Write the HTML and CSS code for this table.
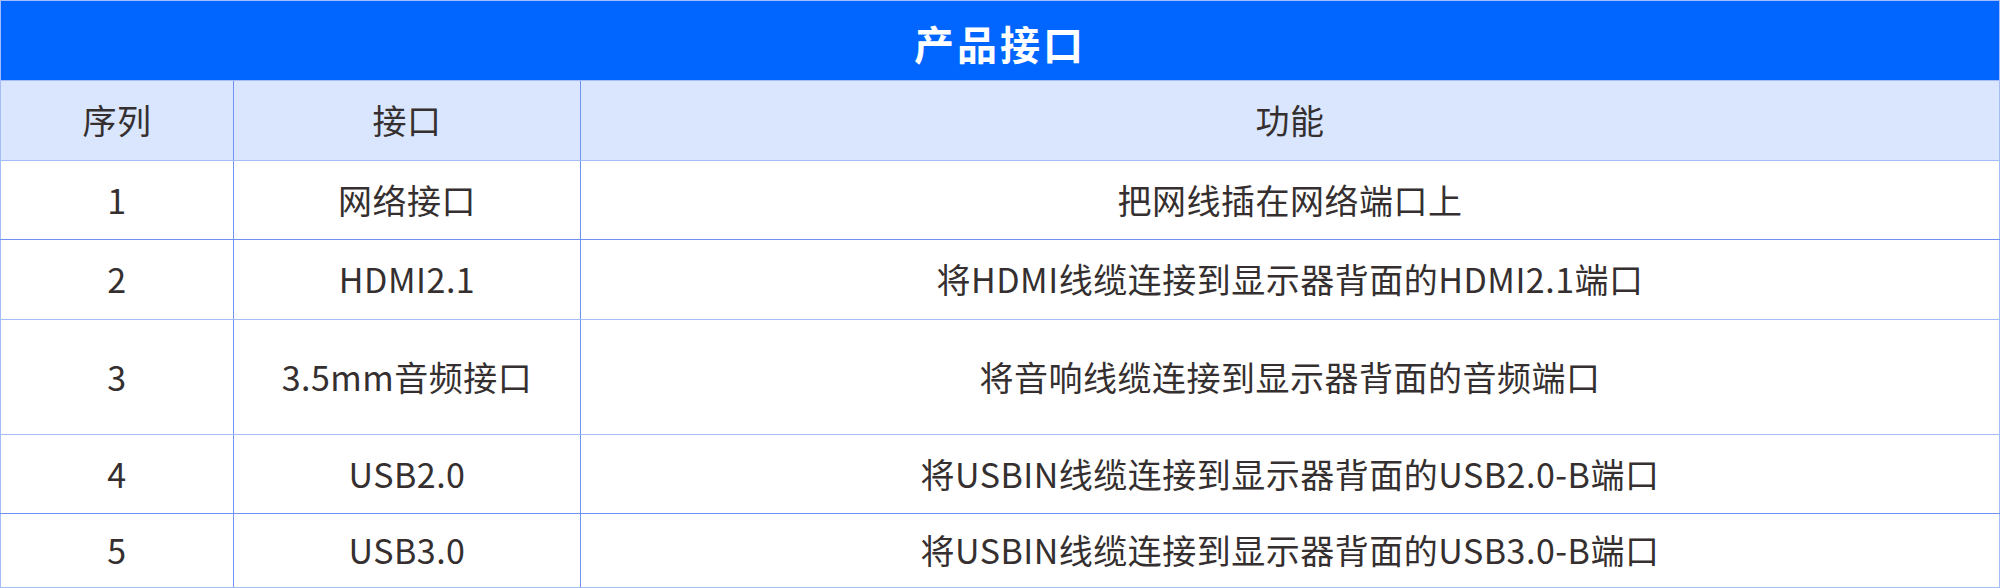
FILE: index.html
```html
<!DOCTYPE html>
<html lang="zh-CN">
<head>
<meta charset="utf-8">
<title>产品接口</title>
<link rel="stylesheet" href="styles.css">
</head>
<body>
<table class="spec">
  <colgroup>
    <col class="c-idx">
    <col class="c-port">
    <col class="c-func">
  </colgroup>
  <thead>
    <tr class="title-row"><th colspan="3" class="title">产品接口</th></tr>
    <tr class="head-row"><th>序列</th><th>接口</th><th>功能</th></tr>
  </thead>
  <tbody>
    <tr class="r1"><td>1</td><td>网络接口</td><td>把网线插在网络端口上</td></tr>
    <tr class="r2"><td>2</td><td>HDMI2.1</td><td>将HDMI线缆连接到显示器背面的HDMI2.1端口</td></tr>
    <tr class="r3"><td>3</td><td>3.5mm音频接口</td><td>将音响线缆连接到显示器背面的音频端口</td></tr>
    <tr class="r4"><td>4</td><td>USB2.0</td><td>将USBIN线缆连接到显示器背面的USB2.0-B端口</td></tr>
    <tr class="r5"><td>5</td><td>USB3.0</td><td>将USBIN线缆连接到显示器背面的USB3.0-B端口</td></tr>
  </tbody>
</table>
</body>
</html>
```
FILE: styles.css
```css
html, body {
  margin: 0;
  padding: 0;
  background: #ffffff;
}

.spec {
  width: 2000px;
  border-collapse: collapse;
  table-layout: fixed;
  font-family: "Noto Sans CJK SC", "Noto Sans", sans-serif;
  color: #352f2f;
  font-size: 34px;
  letter-spacing: 0.5px;
}

.c-idx { width: 233px; }
.c-port { width: 347px; }

.spec th,
.spec td {
  border: 1px solid #6f92f3;
  text-align: center;
  vertical-align: middle;
  padding: 0;
  font-weight: 400;
  line-height: 1.2;
}

.title-row { height: 80px; }
.spec th.title {
  background: #0066ff;
  color: #ffffff;
  font-size: 40px;
  font-weight: 700;
  letter-spacing: 3px;
  border-color: #a4bcf8;
  padding-top: 4px;
}

.head-row { height: 80px; }
.head-row th {
  background: #d9e6fe;
  border-bottom-color: #a4bcf8;
}

.r1 { height: 79px; }
.r2 { height: 80px; }
.r3 { height: 115px; }
.r4 { height: 79px; }
.r5 { height: 74px; }

.spec tr > :first-child { border-left-color: #a4bcf8; }
.spec tr > :last-child { border-right-color: #a4bcf8; }
.r2 td, .r3 td { border-bottom-color: #a4bcf8; }
.r5 td { border-bottom-color: #a4bcf8; }
```
